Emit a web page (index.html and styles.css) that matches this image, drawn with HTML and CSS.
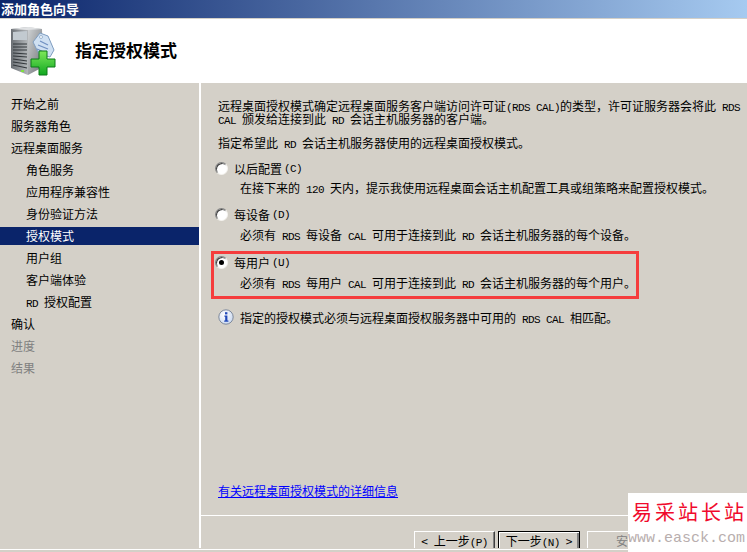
FILE: index.html
```html
<!DOCTYPE html>
<html lang="zh-CN">
<head>
    <meta charset="UTF-8">
    <title>添加角色向导</title>
    <link rel="stylesheet" href="styles.css">
</head>
<body>
    <div class="titlebar">添加角色向导</div>

    <div class="header">
        <svg class="header_icon" width="60" height="56" viewBox="0 0 60 56">
            <defs>
                <linearGradient id="front" x1="0" x2="1" y1="0" y2="0">
                    <stop offset="0" stop-color="#6a6f74"/>
                    <stop offset="1" stop-color="#b4b8bb"/>
                </linearGradient>
                <linearGradient id="side" x1="0" x2="1" y1="0" y2="1">
                    <stop offset="0" stop-color="#d0d3d5"/>
                    <stop offset="1" stop-color="#6c7074"/>
                </linearGradient>
                <linearGradient id="plus" x1="0" x2="0" y1="0" y2="1">
                    <stop offset="0" stop-color="#7ee85a"/>
                    <stop offset="1" stop-color="#10a820"/>
                </linearGradient>
            </defs>
            <!-- server -->
            <path d="M10 6 L27 4 L27 52 L10 45 Z" fill="url(#front)"/>
            <path d="M27 4 L41 6 L42 44 L27 52 Z" fill="url(#side)"/>
            <path d="M10 6 L27 4 L41 6 L26 7 Z" fill="#e0e2e4"/>
            <path d="M12 9 L26 8 L26 17 L12 17 Z" fill="#c2cad0"/>
            <path d="M12 21 L26 21 M12 24 L26 24 M12 27 L26 27 M12 30 L26 31 M12 33 L26 34 M12 36 L26 38 M12 39 L26 41 M12 42 L26 45" stroke="#33383c" stroke-width="1.2"/>
            <rect x="20" y="47" width="3" height="2" fill="#7fe040"/>
            <!-- tag -->
            <path d="M32 19 L39 10 L47 13 L53 27 L49 34 L38 31 Z" fill="#cfe0f2" stroke="#7f9dc0"/>
            <path d="M39 18 L47 22 M37 22 L47 26 M36 26 L45 30" stroke="#6f8fc0" stroke-width="1.2"/>
            <circle cx="40" cy="14" r="1.5" fill="#fff" stroke="#7f9dc0" stroke-width=".7"/>
            <!-- plus -->
            <path d="M38 28 H46 V36 H54 V44 H46 V52 H38 V44 H30 V36 H38 Z" fill="url(#plus)" stroke="#0c7a18"/>
        </svg>
        <div class="header_title">指定授权模式</div>
    </div>

    <div class="wizard">
        <div class="sidebar">
            <div class="step">开始之前</div>
            <div class="step">服务器角色</div>
            <div class="step">远程桌面服务</div>
            <div class="step sub">角色服务</div>
            <div class="step sub">应用程序兼容性</div>
            <div class="step sub">身份验证方法</div>
            <div class="step sub current">授权模式</div>
            <div class="step sub">用户组</div>
            <div class="step sub">客户端体验</div>
            <div class="step sub"><span class="en">RD </span>授权配置</div>
            <div class="step">确认</div>
            <div class="step disabled">进度</div>
            <div class="step disabled">结果</div>
        </div>

        <div class="main">
            <div class="content">
                <p class="intro">远程桌面授权模式确定远程桌面服务客户端访问许可证<span class="en">(RDS CAL)</span>的类型，许可证服务器会将此<span class="en"> RDS CAL </span>颁发给连接到此<span class="en"> RD </span>会话主机服务器的客户端。</p>
                <p class="intro2">指定希望此<span class="en"> RD </span>会话主机服务器使用的远程桌面授权模式。</p>

                <div class="option first">
                    <div class="option_label"><span class="radio"></span>以后配置<span class="en hotkey">(C)</span></div>
                    <div class="option_desc">在接下来的<span class="en"> 120 </span>天内，提示我使用远程桌面会话主机配置工具或组策略来配置授权模式。</div>
                </div>
                <div class="option">
                    <div class="option_label"><span class="radio"></span>每设备<span class="en hotkey">(D)</span></div>
                    <div class="option_desc">必须有<span class="en"> RDS </span>每设备<span class="en"> CAL </span>可用于连接到此<span class="en"> RD </span>会话主机服务器的每个设备。</div>
                </div>
                <div class="option last">
                    <div class="option_label"><span class="radio checked"></span>每用户<span class="en hotkey">(U)</span></div>
                    <div class="option_desc">必须有<span class="en"> RDS </span>每用户<span class="en"> CAL </span>可用于连接到此<span class="en"> RD </span>会话主机服务器的每个用户。</div>
                </div>

                <div class="note">
                    <svg width="16" height="16" viewBox="0 0 16 16">
                        <defs>
                            <radialGradient id="ball" cx=".4" cy=".35" r=".75">
                                <stop offset="0" stop-color="#ffffff"/>
                                <stop offset="1" stop-color="#c4d4ee"/>
                            </radialGradient>
                        </defs>
                        <circle cx="8" cy="8" r="7.2" fill="url(#ball)" stroke="#7f8a9c"/>
                        <rect x="7" y="3.2" width="2.4" height="2.2" fill="#2048b8"/>
                        <path d="M6.4 6.6 H9.4 V11.6 H10.4 V12.8 H6.2 V11.6 H7.2 V7.8 H6.4 Z" fill="#2048b8"/>
                    </svg>
                    <span>指定的授权模式必须与远程桌面授权服务器中可用的<span class="en"> RDS CAL </span>相匹配。</span>
                </div>

                <a class="more_link" href="#">有关远程桌面授权模式的详细信息</a>
            </div>

            <div class="footer">
                <div class="btn back">&lt;<span class="en"> </span>上一步<span class="en">(P)</span></div>
                <div class="btn next">下一步<span class="en">(N) </span>&gt;</div>
                <div class="btn install">安装</div>
            </div>
        </div>
    </div>
    <div class="bottom_strip"></div>

    <!-- annotation and site stamp on top of the screenshot -->
    <div class="red_box"></div>
    <div class="stamp">
        <div class="stamp_name">易采站长站</div>
        <div class="stamp_url">www.easck.com</div>
    </div>
</body>
</html>
```

FILE: styles.css
```css
* {
    box-sizing: border-box;
}
html, body {
    margin: 0;
    height: 100%;
}
body {
    position: relative;
    width: 747px;
    height: 552px;
    overflow: hidden;
    display: flex;
    flex-direction: column;
    background-color: #d4d0c8;
    color: #000;
    font-family: "Noto Sans CJK SC", "Liberation Sans", sans-serif;
    font-size: 12px;
    line-height: 13px;
}
.en {
    font-family: "Liberation Mono", monospace;
    font-size: 11px;
    letter-spacing: -0.6px;
    line-height: 0;
    white-space: pre-wrap;
}
.en.hotkey {
    margin-left: 2px;
}

.titlebar {
    height: 19px;
    padding-left: 1px;
    border-bottom: 1px solid #d4d0c8;
    background: linear-gradient(to right, #0a246a, #a6caf0);
    color: #fff;
    font-size: 13px;
    font-weight: bold;
    line-height: 17px;
}

.header {
    height: 64px;
    display: flex;
    align-items: center;
    background-color: #fff;
}
.header_icon {
    flex: none;
    margin-left: 1px;
}
.header_title {
    margin-left: 14px;
    margin-top: -2px;
    font-size: 17px;
    font-weight: bold;
    line-height: 20px;
}

.wizard {
    height: 465px;
    display: flex;
}
.sidebar {
    width: 201px;
    flex: none;
    padding-top: 12px;
    display: flex;
    flex-direction: column;
    gap: 4px;
    border-right: 2px solid #fff;
}
.step {
    height: 18px;
    padding-left: 11px;
    line-height: 18px;
}
.step.sub {
    padding-left: 26px;
}
.step.current {
    background-color: #0a246a;
    color: #fff;
}
.step.disabled {
    color: #808080;
}

.main {
    flex: 1;
    display: flex;
    flex-direction: column;
    min-width: 0;
}
.content {
    flex: 1;
    display: flex;
    flex-direction: column;
    padding: 16px 0 18px 17px;
}
.intro {
    width: 526px;
    margin: 0;
}
.intro2 {
    margin: 11px 0 0;
}

.option {
    margin-top: 14px;
}
.option.first {
    margin-top: 13px;
}
.option.last {
    margin-top: 15px;
}
.option_label {
    display: flex;
    align-items: center;
    height: 13px;
}
.option_desc {
    margin-top: 7px;
    padding-left: 22px;
}
.option.first .option_desc {
    margin-top: 6px;
}
.radio {
    flex: none;
    width: 13px;
    height: 13px;
    margin-left: -3px;
    margin-right: 6px;
    border-radius: 50%;
    border: 1px solid;
    border-color: #808080 #f4f2ee #f4f2ee #808080;
    background-color: #fff;
    box-shadow: inset 1px 1px 0 #404040;
    position: relative;
}
.radio.checked::after {
    content: "";
    position: absolute;
    left: 3px;
    top: 3px;
    width: 5px;
    height: 5px;
    border-radius: 50%;
    background-color: #000;
}

.note {
    margin-top: 20px;
    display: flex;
    align-items: center;
    gap: 6px;
}
.note svg {
    flex: none;
}

.more_link {
    margin-top: auto;
    color: #0000ff;
    text-decoration: underline;
}

.footer {
    height: 33px;
    flex: none;
    display: flex;
    padding: 15px 0 0 213px;
    overflow: hidden;
    border-top: 1px solid #fff;
}
.btn {
    height: 24px;
    padding-top: 2px;
    text-align: center;
    line-height: 14px;
    font-size: 12px;
    border: 1px solid;
    border-color: #fff #404040 #404040 #fff;
    box-shadow: inset -1px 0 0 #808080;
}
.btn.back {
    width: 81px;
}
.btn.next {
    width: 82px;
    margin-left: 3px;
    border: 1px solid #000;
    box-shadow: inset 1px 1px 0 #fff, inset -2px 0 0 #808080;
}
.btn.install {
    width: 82px;
    margin-left: 7px;
    color: #808080;
}

.bottom_strip {
    height: 3px;
    margin-top: 1px;
    border-top: 1px solid #fff;
}

.red_box {
    position: absolute;
    left: 211px;
    top: 251px;
    width: 428px;
    height: 48px;
    border: 3px solid #f53c3c;
}

.stamp {
    position: absolute;
    left: 628px;
    top: 493px;
    width: 119px;
    height: 59px;
    background-color: #fff;
}
.stamp_name {
    margin-top: 7px;
    padding-left: 4px;
    color: #f00a2c;
    font-family: "Noto Sans CJK SC", serif;
    font-size: 20px;
    letter-spacing: 3px;
    line-height: 24px;
    white-space: nowrap;
}
.stamp_url {
    margin-top: 6px;
    color: #b8aeae;
    font-family: "Liberation Mono", monospace;
    font-size: 15px;
    line-height: 18px;
    white-space: nowrap;
}
```
